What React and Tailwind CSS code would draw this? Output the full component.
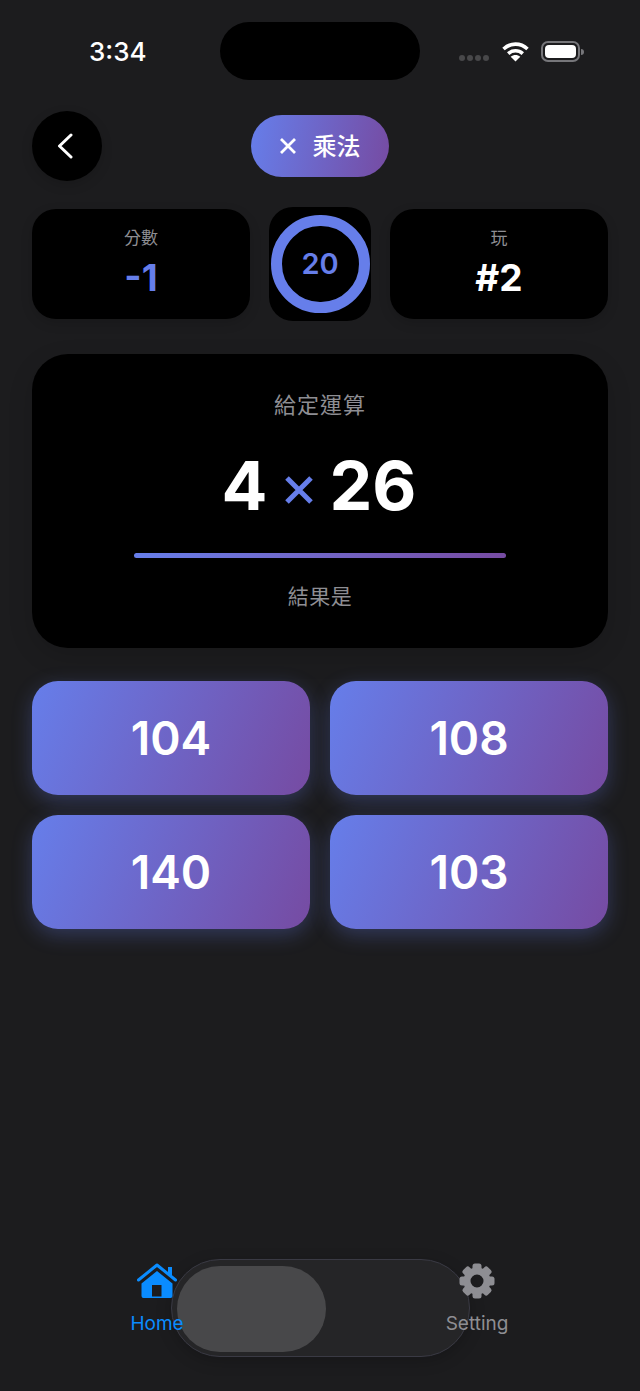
import React from "react";

const sans = "font-['Inter','Noto_Sans_CJK_TC',sans-serif]";

function Wifi() {
  return (
    <svg width="27" height="21" viewBox="0 0 27 21" fill="none" stroke="#fff" strokeWidth="3.600">
      <path d="M1.500 8C8.500 1.500 18.500 1.500 25.500 8" />
      <path d="M6.200 12.600C10.500 8.800 16.500 8.800 20.800 12.600" />
      <path d="M13.500 20.500l-4.800-4.800c2.800-2.300 6.800-2.300 9.600 0z" fill="#fff" stroke="none" />
    </svg>
  );
}

function Battery() {
  return (
    <div className="flex items-center gap-[1px]">
      <div className="w-[39px] h-[21px] rounded-[7px] border-2 border-[#76767a] p-[2px]">
        <div className="w-full h-full rounded-[4px] bg-white" />
      </div>
      <div className="w-[3px] h-[6px] rounded-r-full bg-[#76767a]" />
    </div>
  );
}

function HomeIcon() {
  return (
    <svg width="40" height="35" viewBox="0 0 40 35">
      <path d="M31 4h4v10l-4-3.500z" fill="#0a8cff" />
      <path d="M1.500 17L20 2l18.500 15" fill="none" stroke="#0a8cff" strokeWidth="3" strokeLinecap="round" strokeLinejoin="round" />
      <path fillRule="evenodd" d="M20 8l15.500 12.500V33a2 2 0 0 1-2 2h-27a2 2 0 0 1-2-2V20.500zM15 22v11.500h9.500V22z" fill="#0a8cff" />
    </svg>
  );
}

function GearIcon() {
  const teeth = [0, 45, 90, 135, 180, 225, 270, 315];
  return (
    <svg width="36" height="36" viewBox="0 0 36 36">
      {teeth.map((a) => (
        <rect key={a} x="13.500" y="0.500" width="9" height="9" rx="2.500" fill="#8e8e93" transform={`rotate(${a} 18 18)`} />
      ))}
      <circle cx="18" cy="18" r="10" fill="none" stroke="#8e8e93" strokeWidth="7" />
    </svg>
  );
}

function StatCard({ label, value, valueClass }) {
  return (
    <div className="flex-1 h-[110px] rounded-[24px] bg-black flex flex-col items-center pt-[19px] shadow-[0_4px_12px_rgba(0,0,0,0.15)]">
      <span className="text-[17px] leading-[20px] text-[#8e8e93]">{label}</span>
      <span className={`text-[37px] leading-[40px] font-bold mt-[10px] ${valueClass}`}>{value}</span>
    </div>
  );
}

function Answer({ value }) {
  return (
    <div className="h-[114px] rounded-[26px] bg-[linear-gradient(112deg,#667eea,#764ba2)] flex items-center justify-center shadow-[0_6px_20px_rgba(102,126,234,0.3)]">
      <span className="text-[46px] font-semibold text-white">{value}</span>
    </div>
  );
}

export default function App() {
  return (
    <div className={`relative w-[640px] h-[1391px] overflow-hidden bg-[#1c1c1e] flex flex-col ${sans}`}>
      {/* status bar */}
      <div className="h-[111px] shrink-0 flex items-start pt-[22px] pl-[89px] pr-[56px]">
        <span className="w-[131px] pt-[13px] text-[26px] leading-[34px] font-medium text-white">3:34</span>
        <div className="w-[200px] h-[58px] rounded-[29px] bg-black" />
        <div className="flex-1 flex items-center justify-end pt-[19px] gap-[12px]">
          <div className="flex gap-[2px] mt-[12px] mr-[1px]">
            <span className="w-[6px] h-[6px] rounded-full bg-[#48484a]" />
            <span className="w-[6px] h-[6px] rounded-full bg-[#48484a]" />
            <span className="w-[6px] h-[6px] rounded-full bg-[#48484a]" />
            <span className="w-[6px] h-[6px] rounded-full bg-[#48484a]" />
          </div>
          <Wifi />
          <Battery />
        </div>
      </div>

      <div className="px-[32px] flex flex-col">
        {/* header */}
        <div className="relative h-[70px] flex items-center justify-center">
          <button className="absolute left-0 top-0 w-[70px] h-[70px] rounded-full bg-black flex items-center justify-center pr-[5px] shadow-[0_4px_12px_rgba(0,0,0,0.15)]">
            <svg width="16" height="26" viewBox="0 0 16 26" fill="none" stroke="#fff" strokeWidth="3" strokeLinecap="round" strokeLinejoin="round">
              <path d="M14 2L2.500 13 14 24" />
            </svg>
          </button>
          <div className="w-[138px] h-[62px] rounded-[31px] bg-[linear-gradient(100deg,#667eea,#764ba2)] flex items-center justify-center gap-[16px] pr-[1px] text-white font-medium text-[24px]">
            <svg width="18" height="18" viewBox="0 0 18 18" fill="none" stroke="#fff" strokeWidth="2.800">
              <path d="M2 2l14 14M16 2L2 16" />
            </svg>
            <span className="pt-[2px]">乘法</span>
          </div>
        </div>

        {/* stats */}
        <div className="flex items-center gap-[19px] mt-[26px] h-[114px]">
          <StatCard label="分數" value="-1" valueClass="text-[#667eea]" />
          <div className="w-[102px] h-[114px] rounded-[24px] bg-black flex items-center justify-center">
            <div className="w-[99px] h-[98px] rounded-full border-[11px] border-[#667eea] flex items-center justify-center">
              <span className="text-[29px] font-semibold text-[#667eea]">20</span>
            </div>
          </div>
          <StatCard label="玩" value="#2" valueClass="text-white" />
        </div>

        {/* question */}
        <div className="mt-[33px] h-[294px] rounded-[36px] bg-black flex flex-col items-center pt-[36px] shadow-[0_8px_24px_rgba(0,0,0,0.15)]">
          <span className="text-[22px] leading-[30px] tracking-[1px] text-[#8e8e93]">給定運算</span>
          <div className="mt-[27px] h-[76px] flex items-center gap-[17px] pr-[2px] text-white font-bold text-[68px] leading-[76px]">
            <span>4</span>
            <svg width="28" height="28" viewBox="0 0 28 28" fill="none" stroke="#667eea" strokeWidth="5" className="mt-[9px]">
              <path d="M2 2l24 24M26 2L2 26" />
            </svg>
            <span>26</span>
          </div>
          <div className="mt-[30px] w-[372px] h-[5px] rounded-full bg-gradient-to-r from-[#667eea] to-[#764ba2]" />
          <span className="mt-[24px] text-[21px] leading-[30px] tracking-[0.500px] text-[#8e8e93]">結果是</span>
        </div>

        {/* answers */}
        <div className="mt-[33px] grid grid-cols-2 gap-[20px]">
          <Answer value="104" />
          <Answer value="108" />
          <Answer value="140" />
          <Answer value="103" />
        </div>
      </div>

      {/* tab bar */}
      <div className="mt-auto h-[132px] relative flex pl-[117px] pr-[123px] pt-[4px] justify-between">
        <div className="absolute left-[171px] top-0 w-[299px] h-[98px] rounded-[49px] bg-[#252527] border border-[#3a3a44] px-[5px] py-[6px] shadow-[0_4px_16px_rgba(0,0,0,0.2)]">
          <div className="w-[149px] h-[86px] rounded-[43px] bg-[#48484a]" />
        </div>
        <div className="relative flex flex-col items-center w-[80px]">
          <HomeIcon />
          <span className="mt-[13px] text-[19px] leading-[26px] text-[#0a8cff]">Home</span>
        </div>
        <div className="relative flex flex-col items-center w-[80px]">
          <GearIcon />
          <span className="mt-[12px] text-[19px] leading-[26px] text-[#8e8e93]">Setting</span>
        </div>
      </div>
    </div>
  );
}
